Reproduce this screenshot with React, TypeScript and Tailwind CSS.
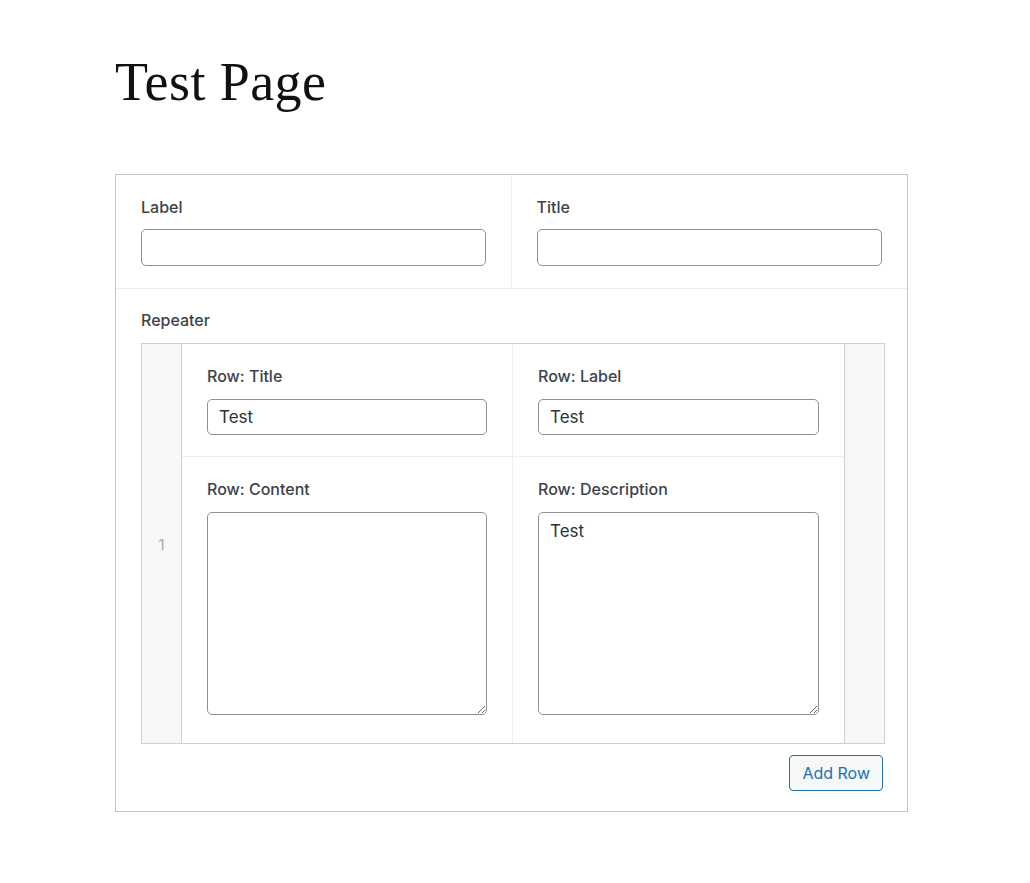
import React from "react";

const sans = "font-['Inter','Liberation_Sans',sans-serif]";

function FieldLabel({ children }: { children: React.ReactNode }) {
  return (
    <label className="block text-[16px] leading-5 font-medium text-[#3c434a]">
      {children}
    </label>
  );
}

function TextInput({ value = "" }: { value?: string }) {
  return (
    <input
      type="text"
      defaultValue={value}
      className="block w-full rounded-[5px] border border-[#8c8f94] bg-white px-[11px] text-[17px] text-[#2c3338] outline-none"
    />
  );
}

function TextArea({ value = "" }: { value?: string }) {
  return (
    <textarea
      defaultValue={value}
      className="block h-[203px] w-full rounded-[5px] border border-[#8c8f94] bg-white px-[11px] py-[6px] text-[17px] leading-6 text-[#2c3338] outline-none"
    />
  );
}

function RepeaterCell({
  label,
  children,
  className = "",
}: {
  label: string;
  children: React.ReactNode;
  className?: string;
}) {
  return (
    <div className={`px-[25px] pt-[22px] ${className}`}>
      <FieldLabel>{label}</FieldLabel>
      <div className="mt-[13px]">{children}</div>
    </div>
  );
}

export default function App() {
  return (
    <div className={`min-h-screen bg-white ${sans}`}>
      <div className="pl-[115px] pt-[52px]">
        <h1 className="font-['Liberation_Serif','DejaVu_Serif',serif] text-[54px] leading-[60px] tracking-[0.4px] text-[#111]">
          Test Page
        </h1>

        <div className="mt-[62px] w-[793px] border border-[#c3c4c7]">
          {/* top fields */}
          <div className="grid grid-cols-2 border-b border-[#eeeeee]">
            <div className="border-r border-[#eeeeee] px-[25px] pt-[22px] pb-[22px]">
              <FieldLabel>Label</FieldLabel>
              <div className="mt-[12px] [&_input]:h-[37px]">
                <TextInput />
              </div>
            </div>
            <div className="px-[25px] pt-[22px] pb-[22px]">
              <FieldLabel>Title</FieldLabel>
              <div className="mt-[12px] [&_input]:h-[37px]">
                <TextInput />
              </div>
            </div>
          </div>

          {/* repeater */}
          <div className="px-[25px] pt-[21px] pb-[20px]">
            <FieldLabel>Repeater</FieldLabel>
            <div className="mt-[13px] flex h-[401px] w-[744px] border border-[#ccd0d4]">
              <div className="flex w-[40px] shrink-0 items-center justify-center border-r border-[#ccd0d4] bg-[#f6f7f7] pt-[3px] text-[15px] text-[#a7aaad]">
                1
              </div>
              <div className="grid flex-1 grid-cols-2 grid-rows-[113px_1fr]">
                <RepeaterCell label="Row: Title" className="border-r border-b border-[#eeeeee]">
                  <div className="[&_input]:h-[36px]">
                    <TextInput value="Test" />
                  </div>
                </RepeaterCell>
                <RepeaterCell label="Row: Label" className="border-b border-[#eeeeee]">
                  <div className="[&_input]:h-[36px]">
                    <TextInput value="Test" />
                  </div>
                </RepeaterCell>
                <RepeaterCell label="Row: Content" className="border-r border-[#eeeeee]">
                  <TextArea />
                </RepeaterCell>
                <RepeaterCell label="Row: Description">
                  <TextArea value="Test" />
                </RepeaterCell>
              </div>
              <div className="w-[40px] shrink-0 border-l border-[#ccd0d4] bg-[#f6f7f7]" />
            </div>
            <div className="mt-[11px] flex w-[742px] justify-end">
              <button className="h-[36px] rounded-[4px] border border-[#2271b1] bg-[#f6f7f7] px-[12px] text-[16px] text-[#2271b1]">
                Add Row
              </button>
            </div>
          </div>
        </div>
      </div>
    </div>
  );
}
